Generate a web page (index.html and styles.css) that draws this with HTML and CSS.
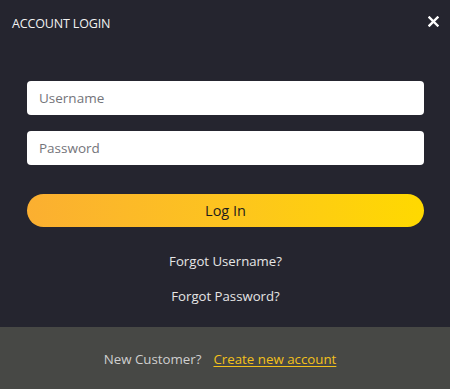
FILE: index.html
```html
<!DOCTYPE html>
<html>
<head>
<meta charset="utf-8">
<link rel="stylesheet" href="styles.css">
</head>
<body>
<div class="modal">
  <div class="header">
    <span class="title">ACCOUNT LOGIN</span>
    <span class="close" aria-label="close">
      <svg width="11" height="11" viewBox="0 0 11 11"><path d="M1.5 1.5 L9.5 9.5 M9.5 1.5 L1.5 9.5" stroke="#fff" stroke-width="2.4" stroke-linecap="square"/></svg>
    </span>
  </div>
  <div class="form">
    <input class="field" type="text" placeholder="Username">
    <input class="field" type="password" placeholder="Password">
    <button class="login">Log In</button>
    <a class="link first">Forgot Username?</a>
    <a class="link">Forgot Password?</a>
  </div>
  <div class="footer">
    <span class="new">New Customer?</span>
    <a class="create">Create new account</a>
  </div>
</div>
</body>
</html>
```
FILE: styles.css
```css
* { box-sizing: border-box; }
html, body { margin: 0; padding: 0; }
body {
  width: 450px;
  height: 389px;
  background: #25252f;
  font-family: "Open Sans", "Noto Sans", sans-serif;
  overflow: hidden;
}
.modal {
  display: flex;
  flex-direction: column;
  height: 389px;
}
.header {
  display: flex;
  justify-content: space-between;
  align-items: center;
  height: 48px;
  padding: 0 11px 0 12px;
}
.title {
  color: #f2f2f2;
  font-size: 12.5px;
  letter-spacing: -0.15px;
  line-height: 20px;
}
.close {
  display: flex;
  width: 11px;
  height: 11px;
  margin-top: -6px;
}
.form {
  flex: 1;
  display: flex;
  flex-direction: column;
  padding: 33px 26px 0 27px;
}
.field {
  height: 34px;
  border: none;
  border-radius: 4px;
  background: #fff;
  padding: 0 12px;
  font-family: inherit;
  font-size: 13.5px;
  color: #333;
  outline: none;
}
.field::placeholder { color: #74747a; }
.field + .field { margin-top: 16px; }
.login {
  margin-top: 29px;
  height: 33px;
  border: none;
  border-radius: 17px;
  background: linear-gradient(90deg, #fbaf31 0%, #fdc41f 50%, #ffd900 100%);
  color: #1d1d1d;
  font-family: inherit;
  font-size: 14.5px;
  padding: 0;
}
.link {
  color: #e6e6e6;
  font-size: 13.2px;
  text-align: center;
  line-height: 20px;
}
.link.first { margin-top: 24px; }
.link + .link { margin-top: 15px; }
.footer {
  height: 62px;
  background: #474845;
  display: flex;
  justify-content: center;
  align-items: center;
  padding: 2px 10px 0 0;
  font-size: 13.3px;
}
.new { color: #cfcfcf; margin-right: 12px; }
.create { color: #f3c11b; text-decoration: underline; text-underline-offset: 2px; }
```
